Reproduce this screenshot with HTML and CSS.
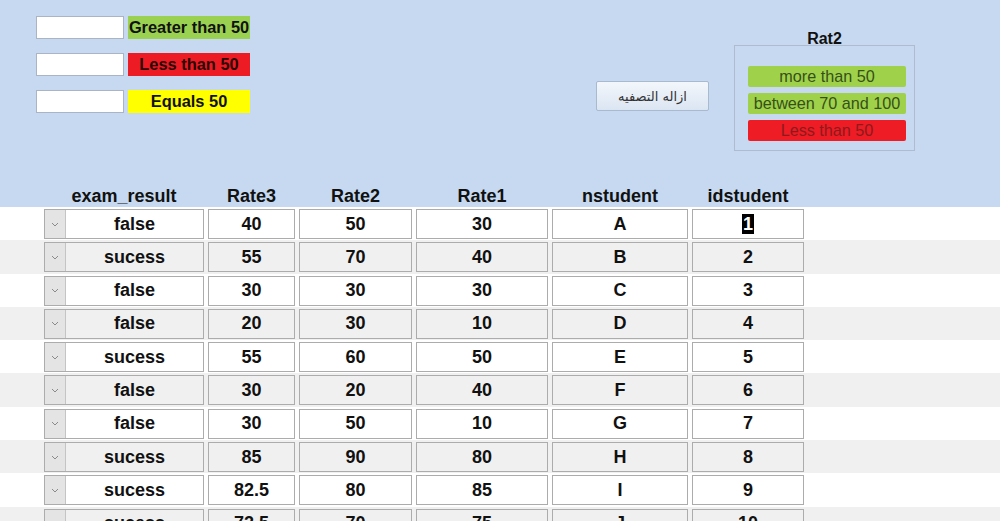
FILE: index.html
```html
<!DOCTYPE html>
<html lang="en">
<head>
<meta charset="utf-8">
<title>Students</title>
<link rel="stylesheet" href="styles.css">
</head>
<body>
<div class="top">
  <div class="panel">
    <div class="legend">
      <div class="legend-row"><div class="legend-input"></div><div class="legend-label green">Greater than 50</div></div>
      <div class="legend-row"><div class="legend-input"></div><div class="legend-label red">Less than 50</div></div>
      <div class="legend-row"><div class="legend-input"></div><div class="legend-label yellow">Equals 50</div></div>
    </div>
    <button class="clear-btn" dir="rtl">ازاله التصفيه</button>
    <div class="group">
      <div class="group-title">Rat2</div>
      <div class="group-box">
        <div class="opt opt-green">more than 50</div>
        <div class="opt opt-green">between 70 and 100</div>
        <div class="opt opt-red">Less than 50</div>
      </div>
    </div>
  </div>
  <div class="grid head">
    <div>exam_result</div><div>Rate3</div><div>Rate2</div><div>Rate1</div><div>nstudent</div><div>idstudent</div>
  </div>
</div>
<div class="rows">
  <div class="row"><div class="grid"><div class="cell combo"><span class="dd"><svg width="8" height="5" viewBox="0 0 8 5"><polyline points="1,1 4,4 7,1" fill="none" stroke="#8a8a8a" stroke-width="1"/></svg></span><span class="ct">false</span></div><div class="cell">40</div><div class="cell">50</div><div class="cell">30</div><div class="cell">A</div><div class="cell"><span class="sel">1</span></div></div></div>
  <div class="row alt"><div class="grid"><div class="cell combo"><span class="dd"><svg width="8" height="5" viewBox="0 0 8 5"><polyline points="1,1 4,4 7,1" fill="none" stroke="#8a8a8a" stroke-width="1"/></svg></span><span class="ct">sucess</span></div><div class="cell">55</div><div class="cell">70</div><div class="cell">40</div><div class="cell">B</div><div class="cell">2</div></div></div>
  <div class="row"><div class="grid"><div class="cell combo"><span class="dd"><svg width="8" height="5" viewBox="0 0 8 5"><polyline points="1,1 4,4 7,1" fill="none" stroke="#8a8a8a" stroke-width="1"/></svg></span><span class="ct">false</span></div><div class="cell">30</div><div class="cell">30</div><div class="cell">30</div><div class="cell">C</div><div class="cell">3</div></div></div>
  <div class="row alt"><div class="grid"><div class="cell combo"><span class="dd"><svg width="8" height="5" viewBox="0 0 8 5"><polyline points="1,1 4,4 7,1" fill="none" stroke="#8a8a8a" stroke-width="1"/></svg></span><span class="ct">false</span></div><div class="cell">20</div><div class="cell">30</div><div class="cell">10</div><div class="cell">D</div><div class="cell">4</div></div></div>
  <div class="row"><div class="grid"><div class="cell combo"><span class="dd"><svg width="8" height="5" viewBox="0 0 8 5"><polyline points="1,1 4,4 7,1" fill="none" stroke="#8a8a8a" stroke-width="1"/></svg></span><span class="ct">sucess</span></div><div class="cell">55</div><div class="cell">60</div><div class="cell">50</div><div class="cell">E</div><div class="cell">5</div></div></div>
  <div class="row alt"><div class="grid"><div class="cell combo"><span class="dd"><svg width="8" height="5" viewBox="0 0 8 5"><polyline points="1,1 4,4 7,1" fill="none" stroke="#8a8a8a" stroke-width="1"/></svg></span><span class="ct">false</span></div><div class="cell">30</div><div class="cell">20</div><div class="cell">40</div><div class="cell">F</div><div class="cell">6</div></div></div>
  <div class="row"><div class="grid"><div class="cell combo"><span class="dd"><svg width="8" height="5" viewBox="0 0 8 5"><polyline points="1,1 4,4 7,1" fill="none" stroke="#8a8a8a" stroke-width="1"/></svg></span><span class="ct">false</span></div><div class="cell">30</div><div class="cell">50</div><div class="cell">10</div><div class="cell">G</div><div class="cell">7</div></div></div>
  <div class="row alt"><div class="grid"><div class="cell combo"><span class="dd"><svg width="8" height="5" viewBox="0 0 8 5"><polyline points="1,1 4,4 7,1" fill="none" stroke="#8a8a8a" stroke-width="1"/></svg></span><span class="ct">sucess</span></div><div class="cell">85</div><div class="cell">90</div><div class="cell">80</div><div class="cell">H</div><div class="cell">8</div></div></div>
  <div class="row"><div class="grid"><div class="cell combo"><span class="dd"><svg width="8" height="5" viewBox="0 0 8 5"><polyline points="1,1 4,4 7,1" fill="none" stroke="#8a8a8a" stroke-width="1"/></svg></span><span class="ct">sucess</span></div><div class="cell">82.5</div><div class="cell">80</div><div class="cell">85</div><div class="cell">I</div><div class="cell">9</div></div></div>
  <div class="row alt"><div class="grid"><div class="cell combo"><span class="dd"><svg width="8" height="5" viewBox="0 0 8 5"><polyline points="1,1 4,4 7,1" fill="none" stroke="#8a8a8a" stroke-width="1"/></svg></span><span class="ct">sucess</span></div><div class="cell">72.5</div><div class="cell">70</div><div class="cell">75</div><div class="cell">J</div><div class="cell">10</div></div></div>
</div>
</body>
</html>
```
FILE: styles.css
```css
html, body {
  margin: 0;
  padding: 0;
  background: #ffffff;
  overflow: hidden;
  height: 521px;
  font-family: "Liberation Sans", Arial, sans-serif;
}

.top {
  background: #c6d9f0;
  height: 207px;
  display: flex;
  flex-direction: column;
}

.panel {
  height: 180px;
  display: flex;
  align-items: flex-start;
}

.legend {
  margin: 16px 0 0 36px;
  display: flex;
  flex-direction: column;
  gap: 14px;
}

.legend-row {
  display: flex;
  gap: 4px;
  height: 23px;
}

.legend-input {
  width: 86px;
  height: 21px;
  background: #ffffff;
  border: 1px solid #aab4c4;
}

.legend-label {
  width: 122px;
  height: 23px;
  line-height: 23px;
  text-align: center;
  font-weight: bold;
  font-size: 16.4px;
  color: #111;
}
.legend-label.green { background: #9bd150; }
.legend-label.red { background: #ed1c24; color: #2a0606; }
.legend-label.yellow { background: #ffff00; }

.clear-btn {
  margin: 81px 0 0 346px;
  width: 113px;
  height: 30px;
  border: 1px solid #a9b9cf;
  border-radius: 2px;
  background: linear-gradient(#f3f7fc, #dbe5f2);
  font-family: "DejaVu Sans", "Noto Sans", sans-serif;
  font-size: 13px;
  color: #333;
  padding: 0;
}

.group {
  margin: 31px 0 0 25px;
  width: 181px;
  display: flex;
  flex-direction: column;
}

.group-title {
  text-align: center;
  font-weight: bold;
  font-size: 16px;
  line-height: 16px;
  height: 14px;
  color: #111;
}

.group-box {
  height: 106px;
  border: 1px solid #aebccd;
  display: flex;
  flex-direction: column;
  align-items: flex-start;
  padding: 20px 0 0 13px;
  box-sizing: border-box;
  gap: 6px;
}

.opt {
  width: 158px;
  height: 21px;
  line-height: 21px;
  border-radius: 2px;
  text-align: center;
  font-size: 16.2px;
}
.opt-green { background: #9fd24a; color: #37501a; }
.opt-red { background: #ee1c25; color: #8c1a1c; }

.grid {
  display: grid;
  grid-template-columns: 160px 87px 113px 132px 136px 112px;
  column-gap: 4px;
  padding-left: 44px;
}

.head {
  height: 27px;
  box-sizing: border-box;
  padding-top: 5px;
  align-items: center;
  font-weight: bold;
  font-size: 18px;
  color: #111;
}
.head > div { text-align: center; }

.row {
  height: 33.3px;
  padding-top: 2px;
  box-sizing: border-box;
  background: #ffffff;
}
.row.alt { background: #f0f0f0; }

.cell {
  height: 30px;
  border: 1px solid #acacac;
  box-sizing: border-box;
  display: flex;
  align-items: center;
  justify-content: center;
  font-weight: bold;
  font-size: 18px;
  color: #111;
}

.combo {
  justify-content: flex-start;
}
.dd {
  width: 20px;
  height: 28px;
  background: #e4e4e4;
  border-right: 1px solid #c4c4c4;
  display: flex;
  align-items: center;
  justify-content: center;
  flex: none;
}
.ct {
  flex: 1;
  text-align: center;
}

.sel {
  background: #000;
  color: #fff;
  padding: 0 1px;
  line-height: 20px;
}
```
